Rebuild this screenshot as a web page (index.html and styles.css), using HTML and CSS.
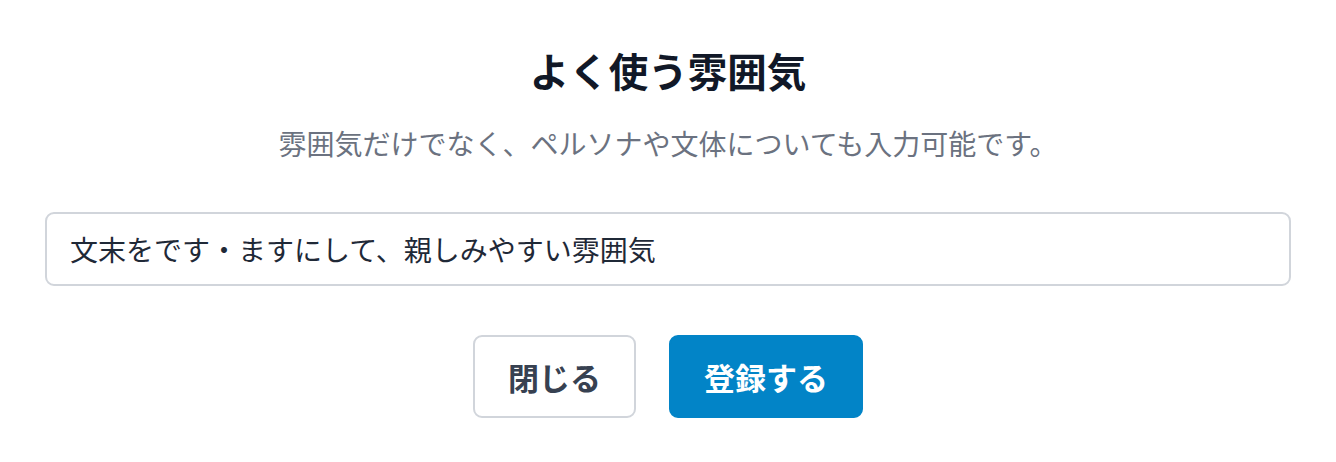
FILE: index.html
```html
<!DOCTYPE html>
<html lang="ja">
<head>
<meta charset="utf-8">
<title>よく使う雰囲気</title>
<link rel="stylesheet" href="styles.css">
</head>
<body>
<div class="dialog">
  <h1 class="title">よく使う雰囲気</h1>
  <p class="subtitle">雰囲気だけでなく、ペルソナや文体についても入力可能です。</p>
  <input class="field" type="text" value="文末をです・ますにして、親しみやすい雰囲気">
  <div class="actions">
    <button class="btn btn-close" type="button">閉じる</button>
    <button class="btn btn-primary" type="button">登録する</button>
  </div>
</div>
</body>
</html>
```

FILE: styles.css
```css
html, body {
  margin: 0;
  padding: 0;
  background: #ffffff;
}
body {
  font-family: "Noto Sans CJK JP", "Noto Sans", sans-serif;
}
.dialog {
  display: flex;
  flex-direction: column;
  align-items: stretch;
  padding: 42px 45px 0 45px;
}
.title {
  margin: 0;
  font-size: 39.5px;
  line-height: 56px;
  font-weight: 700;
  color: #111827;
  text-align: center;
}
.subtitle {
  margin: 25px 0 0 0;
  font-size: 28px;
  line-height: 40px;
  color: #6b7280;
  text-align: center;
}
.field {
  margin-top: 49px;
  box-sizing: border-box;
  height: 74px;
  border: 2px solid #d1d5db;
  border-radius: 9px;
  padding: 0 23px;
  font-family: inherit;
  font-size: 28px;
  color: #1f2937;
  background: #ffffff;
  outline: none;
}
.actions {
  margin-top: 49px;
  display: flex;
  justify-content: center;
  gap: 33px;
}
.btn {
  box-sizing: border-box;
  height: 83px;
  border-radius: 9px;
  font-family: inherit;
  font-size: 31px;
  font-weight: 700;
  line-height: 1;
  cursor: pointer;
}
.btn-close {
  background: #ffffff;
  border: 2px solid #d1d5db;
  color: #374151;
  padding: 0 33px;
}
.btn-primary {
  background: #0284c7;
  border: 2px solid #0284c7;
  color: #ffffff;
  padding: 0 33px;
}
```
